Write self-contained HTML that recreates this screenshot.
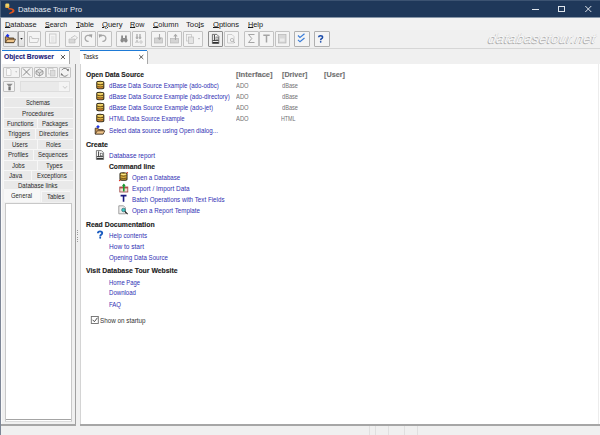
<!DOCTYPE html>
<html><head><meta charset="utf-8">
<style>
*{box-sizing:border-box;margin:0;padding:0}
html,body{width:600px;height:435px;overflow:hidden;background:#f0f0f0;font-family:"Liberation Sans",sans-serif}
body{position:relative}
.a{position:absolute}
.t{position:absolute;white-space:nowrap;line-height:9px;transform-origin:0 0;font-family:"Liberation Sans",sans-serif}
.t u{text-decoration:underline;text-underline-offset:0.3px;text-decoration-thickness:0.7px}
.b{position:absolute;border:1px solid #c2c2c2;border-radius:1px;background:#f4f4f4}
.tr{position:absolute;background:#e9e9e9;border-top:1px solid #f7f7f7;border-left:1px solid #f7f7f7}
svg{position:absolute;overflow:visible}
</style></head><body>
<!-- title bar -->
<div class="a" style="left:0;top:0;width:600px;height:17px;background:#1f385a"></div>
<div class="a" style="left:0;top:17px;width:600px;height:1px;background:#8796a8"></div>
<div class="a" style="left:0;top:0;width:1px;height:17px;background:#4a5f7a"></div>
<svg style="left:0;top:0" width="20" height="18">
 <path d="M8 8 Q13.5 7.5 14.6 10.5 Q14.5 13.2 8.8 14.2 L9.8 12.6 Q12.6 11.8 12.5 10.6 Q12 9.4 8.6 9.6 Z" fill="#e0541c"/>
 <rect x="5.3" y="3.6" width="4" height="4.4" rx="1.2" fill="#f2d267"/>
 <rect x="5.8" y="6.6" width="3" height="1.2" fill="#e2a23a"/>
</svg>
<!-- window controls -->
<div class="a" style="left:532px;top:8.5px;width:6.5px;height:1px;background:#dfe5ec"></div>
<div class="a" style="left:558px;top:6px;width:6.5px;height:6px;border:1px solid #dfe5ec"></div>
<svg style="left:585px;top:6px" width="7" height="6"><path d="M0.3 0 L6.3 6 M6.3 0 L0.3 6" stroke="#dfe5ec" stroke-width="1"/></svg>

<!-- menu -->
<div class="a" style="left:0;top:18px;width:600px;height:12px;background:#f2f2f2"></div>
<!-- toolbar -->
<div class="a" style="left:0;top:30px;width:600px;height:18px;background:#f0f0f0"></div>
<div class="a" style="left:0;top:48px;width:600px;height:1px;background:#d6d6d6"></div>
<!-- window borders -->
<div class="a" style="left:0;top:18px;width:1px;height:417px;background:#7d8696"></div><div class="a" style="left:1px;top:48px;width:1px;height:377px;background:#fafafa"></div>


<!-- toolbar buttons -->
<div class="b" style="left:3px;top:31px;width:15px;height:15.5px;border-color:#bdbdbd;background:#ececec"></div>
<div class="b" style="left:18px;top:31px;width:7px;height:15.5px;border-color:#b5b5b5;border-left:1.5px solid #9a9a9a;background:linear-gradient(#f2f2f2,#e2e2e2)"></div>
<div class="b" style="left:26.5px;top:31px;width:14.5px;height:15.5px"></div>
<div class="b" style="left:45.3px;top:31px;width:15px;height:15.5px"></div>
<div class="b" style="left:65.3px;top:31px;width:15px;height:15.5px"></div>
<div class="b" style="left:80.8px;top:31px;width:15px;height:15.5px"></div>
<div class="b" style="left:97px;top:31px;width:15px;height:15.5px"></div>
<div class="b" style="left:116.3px;top:31px;width:15px;height:15.5px"></div>
<div class="b" style="left:131.7px;top:31px;width:14.5px;height:15.5px"></div>
<div class="b" style="left:150.8px;top:31px;width:15px;height:15.5px"></div>
<div class="b" style="left:167px;top:31px;width:14.5px;height:15.5px"></div>
<div class="b" style="left:183.3px;top:31px;width:20px;height:15.5px"></div>
<div class="b" style="left:208.3px;top:31px;width:15px;height:15.5px;border-color:#8c8c8c;background:#f0f0f0"></div>
<div class="b" style="left:223.7px;top:31px;width:15.5px;height:15.5px"></div>
<div class="b" style="left:244.2px;top:31px;width:14.5px;height:15.5px"></div>
<div class="b" style="left:259.2px;top:31px;width:14.5px;height:15.5px"></div>
<div class="b" style="left:275px;top:31px;width:14.5px;height:15.5px"></div>
<div class="b" style="left:294.4px;top:31px;width:15.2px;height:15.5px;border-color:#b0b0b0"></div>
<div class="b" style="left:314px;top:31px;width:15.6px;height:15.5px;border-color:#b0b0b0"></div>


<!-- main toolbar icons -->
<svg style="left:0;top:30px" width="340" height="18">
 <!-- open folder -->
 <path d="M5.3 6.8 L5.3 12.6 L13.8 12.6 L13.8 8 L9 8 L8.3 6.8 Z" fill="#c89458" stroke="#3e3020" stroke-width="0.8"/>
 <path d="M5.3 12.6 L7.6 9.2 L15.6 9.2 L13.8 12.6 Z" fill="#f0c58a" stroke="#3e3020" stroke-width="0.7"/>
 <path d="M7.6 3.8 L9.5 5.7 L7.6 7.6 L5.7 5.7 Z" fill="#1a2ee8"/>
 <path d="M20.2 8 L22.8 8 L21.5 9.7 Z" fill="#222"/>
 <!-- faded folder -->
 <path d="M29.5 6.5 L29.5 12.5 L37.5 12.5 L39 8.5 L32 8.5 L31.5 6.5 Z" fill="none" stroke="#c4c4c4" stroke-width="0.9"/>
 <!-- doc -->
 <rect x="49.5" y="4" width="6.5" height="9" fill="none" stroke="#c8c8c8" stroke-width="0.9"/>
 <path d="M51 7 L54.5 7 M51 9 L54.5 9 M51 11 L54.5 11" stroke="#d0d0d0" stroke-width="0.7"/>
 <!-- box arrow -->
 <path d="M69 9 L69 13 L75 13 L75 9 Z" fill="#d8d8d8" stroke="#bdbdbd" stroke-width="0.7"/>
 <path d="M71 8 L75 5.5 L77.5 8 L74 10.5" fill="none" stroke="#c0c0c0" stroke-width="0.9"/>
 <!-- redo -->
 <path d="M88.6 11.3 A3 3 0 1 1 90.4 6.4" fill="none" stroke="#a8a8a8" stroke-width="1.3"/>
 <path d="M88.8 4.6 L92.3 4.3 L91.8 7.9 Z" fill="#a0a0a0"/>
 <!-- undo -->
 <path d="M102.4 11.3 A3 3 0 1 0 100.6 6.4" fill="none" stroke="#a8a8a8" stroke-width="1.3"/>
 <path d="M102.2 4.6 L98.7 4.3 L99.2 7.9 Z" fill="#a0a0a0"/>
 <!-- binoculars -->
 <rect x="121.2" y="5.5" width="1.8" height="3" fill="#8a8a8a"/>
 <rect x="125" y="5.5" width="1.8" height="3" fill="#8a8a8a"/>
 <ellipse cx="122.2" cy="10.2" rx="1.7" ry="2.2" fill="#8a8a8a"/>
 <ellipse cx="125.8" cy="10.2" rx="1.7" ry="2.2" fill="#8a8a8a"/>
 <rect x="122.5" y="8" width="3" height="1.6" fill="#8a8a8a"/>
 <!-- find replace -->
 <rect x="136.3" y="4" width="1.4" height="2.4" fill="#b0b0b0"/>
 <rect x="139.3" y="4" width="1.4" height="2.4" fill="#b0b0b0"/>
 <ellipse cx="137" cy="7.6" rx="1.3" ry="1.7" fill="#b0b0b0"/>
 <ellipse cx="140" cy="7.6" rx="1.3" ry="1.7" fill="#b0b0b0"/>
 <path d="M135.5 13 L137 10 L138.5 13 M136 12 L138 12" stroke="#b4b4b4" stroke-width="0.7" fill="none"/>
 <circle cx="141" cy="12" r="1.2" fill="none" stroke="#b4b4b4" stroke-width="0.7"/>
 <!-- insert -->
 <rect x="154.5" y="8" width="8" height="5" fill="#d4d4d4" stroke="#b8b8b8" stroke-width="0.7"/>
 <path d="M159.5 4 L159.5 9 M157.8 7.5 L159.5 9.5 L161.2 7.5" stroke="#a8a8a8" stroke-width="1.1" fill="none"/>
 <!-- append -->
 <rect x="170.5" y="8.5" width="8" height="4.5" fill="#d4d4d4" stroke="#b8b8b8" stroke-width="0.7"/>
 <path d="M175.5 10 L175.5 4.5 M173.8 6.5 L175.5 4.5 L177.2 6.5" stroke="#a8a8a8" stroke-width="1.1" fill="none"/>
 <!-- copy -->
 <rect x="186.5" y="4.5" width="5" height="6.5" fill="#f4f4f4" stroke="#c0c0c0" stroke-width="0.7"/>
 <rect x="188.5" y="7" width="5" height="6.5" fill="#e4e4e4" stroke="#b8b8b8" stroke-width="0.7"/>
 <path d="M198 8.3 L200 8.3 L199 9.4 Z" fill="#9a9a9a"/>
 <!-- report -->
 <path d="M212.4 4.4 L216.8 4.4 L218.8 6.4 L218.8 13.5 L212.4 13.5 Z" fill="#fbfbfb" stroke="#505050" stroke-width="0.8"/>
 <path d="M214.4 5 L214.4 10.6 M212.6 10.6 L218.6 10.6" stroke="#2a2a2a" stroke-width="0.9" fill="none"/>
 <rect x="216" y="7" width="2" height="3" fill="none" stroke="#555" stroke-width="0.6"/>
 <rect x="212.6" y="12" width="6" height="1.3" fill="#2e2e2e"/>
 <!-- preview -->
 <path d="M227.5 4.5 L232 4.5 L234 6.5 L234 13 L227.5 13 Z" fill="none" stroke="#c4c4c4" stroke-width="0.8"/>
 <circle cx="232" cy="10" r="1.6" fill="none" stroke="#b0b0b0" stroke-width="0.8"/>
 <path d="M233.2 11.2 L235 13" stroke="#b0b0b0" stroke-width="0.9"/>
 <!-- sigma -->
 <path d="M248.5 4.5 L254.5 4.5 M248.5 4.5 L251.8 8.5 L248.5 12.5 L254.5 12.5" stroke="#a4a4a4" stroke-width="1" fill="none"/>
 <!-- T -->
 <path d="M263.3 5.3 L269.7 5.3 M266.5 5.3 L266.5 12.5" stroke="#a4a4a4" stroke-width="1.5" fill="none"/>
 <!-- save-ish -->
 <rect x="278.5" y="4.5" width="7.5" height="8.5" fill="#d8d8d8" stroke="#b5b5b5" stroke-width="0.7"/>
 <rect x="280" y="8.5" width="4.5" height="3" fill="#ececec"/>
 <!-- checks -->
 <path d="M298 5.5 L300 7.5 L304.5 3.8 M298 9.8 L300 11.8 L304.5 8" stroke="#3b7dd8" stroke-width="1.2" fill="none"/>
 <!-- help ? -->
 <path d="M318.6 7.3 Q318.7 5.8 320.6 5.8 Q322.6 5.8 322.6 7.3 Q322.6 8.3 321.4 8.8 Q320.7 9.1 320.7 10.2" stroke="#1a4aa8" stroke-width="1.5" fill="none"/>
 <circle cx="320.7" cy="11.8" r="0.85" fill="#1a4aa8"/>
</svg>

<!-- watermark -->
<div class="t" style="left:489.5px;top:31px;font-size:13.5px;line-height:16px;font-style:italic;color:#f8f8f8;text-shadow:-0.8px 0.5px 0 #b0b0b0,0.6px 0.3px 0 #d0d0d0;transform:scaleX(1.06) skewX(-10deg)">databasetour.net</div>

<!-- left panel -->
<div class="a" style="left:2px;top:50px;width:67px;height:14px;background:#fff"></div>
<div class="a" style="left:2px;top:50px;width:67px;height:1.3px;background:#1e7ad6"></div>
<div class="a" style="left:68.5px;top:51px;width:1px;height:13px;background:#a8a8a8"></div>
<div class="a" style="left:75px;top:64px;width:1px;height:361px;background:#a0a0a0"></div>
<div class="a" style="left:1px;top:424px;width:75px;height:2px;background:#a6a6a6"></div>
<div class="a" style="left:5px;top:203px;width:67px;height:219px;background:#fff;border:1px solid #c8c8c8;border-bottom-color:#dcdcdc;box-shadow:inset 0 -1px 0 #ffffff, inset 0 -2px 0 #a4a4a4"></div>


<!-- left toolbar -->
<div class="b" style="left:3.4px;top:66.5px;width:16.2px;height:11px;border-color:#c4c4c4;background:#f3f3f3"></div>
<div class="b" style="left:20.5px;top:66.5px;width:12px;height:11px;border-color:#c4c4c4;background:#f3f3f3"></div>
<div class="b" style="left:33.8px;top:66.5px;width:11.8px;height:11px;border-color:#c4c4c4;background:#f3f3f3"></div>
<div class="b" style="left:46px;top:66.5px;width:12px;height:11px;border-color:#c4c4c4;background:#f3f3f3"></div>
<div class="b" style="left:58.8px;top:66.5px;width:12px;height:11px;border-color:#c4c4c4;background:#f3f3f3"></div>
<div class="b" style="left:3.4px;top:81px;width:12px;height:11.3px;border-color:#c0c0c0;background:#f3f3f3"></div>
<div class="a" style="left:19.5px;top:81.2px;width:50px;height:11.2px;border:1px solid #dedede;background:#eaeaea"></div>
<div class="a" style="left:58.5px;top:82.2px;width:10px;height:9.2px;background:#f4f4f4"></div>
<svg style="left:0;top:64px" width="76" height="30">
 <path d="M6.5 4.5 L9.5 4.5 L11 6 L11 11.5 L6.5 11.5 Z" fill="#fafafa" stroke="#c4c4c4" stroke-width="0.7"/>
 <path d="M15.3 7.5 L17 7.5 L16.15 8.5 Z" fill="#8a8a8a"/>
 <path d="M23 4.5 L30 11.5 M30 4.5 L23 11.5" stroke="#7a7a7a" stroke-width="0.9"/>
 <path d="M36 7 L39.5 5 L43 7 L43 10 L39.5 12 L36 10 Z" fill="#e0e0e0" stroke="#8e8e8e" stroke-width="0.8"/>
 <path d="M36 7 L39.5 9 L43 7 M39.5 9 L39.5 12" stroke="#8e8e8e" stroke-width="0.7" fill="none"/>
 <rect x="48.5" y="4.5" width="4.5" height="5.5" fill="#f6f6f6" stroke="#c4c4c4" stroke-width="0.6"/>
 <rect x="50.5" y="6.5" width="4.5" height="5.5" fill="#dcdcdc" stroke="#bcbcbc" stroke-width="0.6"/>
 <path d="M61.8 6.2 A3.3 3.3 0 0 1 68 7 M67.8 10.5 A3.3 3.3 0 0 1 61.6 9.6" fill="none" stroke="#7a7a7a" stroke-width="0.9"/>
 <path d="M66.5 5.5 L68.5 7.5 L69 4.8 Z M63 11 L61 9 L60.8 11.6 Z" fill="#7a7a7a"/>
 <path d="M6.5 19.8 L12.7 19.8 L10.5 22.3 L8.6 22.3 Z" fill="#8c8c8c"/>
 <rect x="8.4" y="22.5" width="2.3" height="3.8" fill="#707070"/>
 <path d="M63 22.2 L65 24.4 L67 22.2" stroke="#b4b4b4" stroke-width="0.7" fill="none"/>
</svg>


<!-- multirow tabs -->
<div class="tr" style="left:3.3px;top:97.3px;width:69.4px;height:10px"></div>
<div class="tr" style="left:3.3px;top:107.3px;width:69.4px;height:10.7px"></div>
<div class="tr" style="left:3.3px;top:118px;width:34px;height:10px"></div>
<div class="tr" style="left:37.3px;top:118px;width:35.4px;height:10px"></div>
<div class="tr" style="left:3.3px;top:128px;width:31.7px;height:10.5px"></div>
<div class="tr" style="left:35px;top:128px;width:37.7px;height:10.5px"></div>
<div class="tr" style="left:3.3px;top:138.5px;width:33.4px;height:10.8px"></div>
<div class="tr" style="left:36.7px;top:138.5px;width:36px;height:10.8px"></div>
<div class="tr" style="left:3.3px;top:149.3px;width:29.4px;height:10.4px"></div>
<div class="tr" style="left:32.7px;top:149.3px;width:40px;height:10.4px"></div>
<div class="tr" style="left:3.3px;top:159.7px;width:33.4px;height:10.3px"></div>
<div class="tr" style="left:36.7px;top:159.7px;width:36px;height:10.3px"></div>
<div class="tr" style="left:3.3px;top:170px;width:28px;height:10px"></div>
<div class="tr" style="left:31.3px;top:170px;width:41.4px;height:10px"></div>
<div class="tr" style="left:3.3px;top:180px;width:69.4px;height:9.3px"></div>
<div class="a" style="left:4px;top:189.3px;width:36px;height:13px;background:#f7f7f7"></div>
<div class="tr" style="left:40.7px;top:191px;width:29.3px;height:11px"></div>

<!-- right tab & content -->
<div class="a" style="left:80px;top:50px;width:67px;height:14px;background:#fff"></div>
<div class="a" style="left:80px;top:50px;width:67px;height:1.3px;background:#1e7ad6"></div>
<div class="a" style="left:146.5px;top:51px;width:1px;height:13px;background:#a8a8a8"></div>
<div class="a" style="left:80px;top:64px;width:520px;height:361px;background:#fff"></div>
<div class="a" style="left:80px;top:64px;width:1px;height:361px;background:#d4d4d4"></div>
<div class="a" style="left:80px;top:424px;width:520px;height:2px;background:#a6a6a6"></div>
<!-- tab close x -->
<svg style="left:0;top:50px" width="150" height="14">
 <path d="M60.9 5 L65 9 M65 5 L60.9 9" stroke="#444" stroke-width="0.9"/>
 <path d="M139.2 5 L143.3 9 M143.3 5 L139.2 9" stroke="#444" stroke-width="0.9"/>
</svg>
<!-- content icons -->
<svg style="left:0;top:0" width="600" height="435">
<g transform="translate(96.3,81)">
 <path d="M0.5 1.5 Q0.5 0.3 4 0.3 Q7.5 0.3 7.5 1.5 L7.5 6.7 Q7.5 7.8 4 7.8 Q0.5 7.8 0.5 6.7 Z" fill="#d0a030" stroke="#2e2818" stroke-width="1.05"/>
 <path d="M1.3 1.6 Q4 2.6 6.7 1.6" stroke="#fae88a" stroke-width="1.1" fill="none"/>
 <path d="M1.2 3.4 Q4 4.3 6.8 3.4" stroke="#4a3a18" stroke-width="0.8" fill="none"/>
 <path d="M1.2 4.4 Q4 5.3 6.8 4.4" stroke="#f0c850" stroke-width="0.8" fill="none"/>
 <path d="M1.2 5.6 Q4 6.5 6.8 5.6" stroke="#5a4018" stroke-width="0.8" fill="none"/>
 <path d="M2 6.6 Q4 7.2 6 6.6" stroke="#e06a40" stroke-width="0.6" fill="none"/>
</g>
<g transform="translate(96.3,92)">
 <path d="M0.5 1.5 Q0.5 0.3 4 0.3 Q7.5 0.3 7.5 1.5 L7.5 6.7 Q7.5 7.8 4 7.8 Q0.5 7.8 0.5 6.7 Z" fill="#d0a030" stroke="#2e2818" stroke-width="1.05"/>
 <path d="M1.3 1.6 Q4 2.6 6.7 1.6" stroke="#fae88a" stroke-width="1.1" fill="none"/>
 <path d="M1.2 3.4 Q4 4.3 6.8 3.4" stroke="#4a3a18" stroke-width="0.8" fill="none"/>
 <path d="M1.2 4.4 Q4 5.3 6.8 4.4" stroke="#f0c850" stroke-width="0.8" fill="none"/>
 <path d="M1.2 5.6 Q4 6.5 6.8 5.6" stroke="#5a4018" stroke-width="0.8" fill="none"/>
 <path d="M2 6.6 Q4 7.2 6 6.6" stroke="#e06a40" stroke-width="0.6" fill="none"/>
</g>
<g transform="translate(96.3,103)">
 <path d="M0.5 1.5 Q0.5 0.3 4 0.3 Q7.5 0.3 7.5 1.5 L7.5 6.7 Q7.5 7.8 4 7.8 Q0.5 7.8 0.5 6.7 Z" fill="#d0a030" stroke="#2e2818" stroke-width="1.05"/>
 <path d="M1.3 1.6 Q4 2.6 6.7 1.6" stroke="#fae88a" stroke-width="1.1" fill="none"/>
 <path d="M1.2 3.4 Q4 4.3 6.8 3.4" stroke="#4a3a18" stroke-width="0.8" fill="none"/>
 <path d="M1.2 4.4 Q4 5.3 6.8 4.4" stroke="#f0c850" stroke-width="0.8" fill="none"/>
 <path d="M1.2 5.6 Q4 6.5 6.8 5.6" stroke="#5a4018" stroke-width="0.8" fill="none"/>
 <path d="M2 6.6 Q4 7.2 6 6.6" stroke="#e06a40" stroke-width="0.6" fill="none"/>
</g>
<g transform="translate(96.3,114)">
 <path d="M0.5 1.5 Q0.5 0.3 4 0.3 Q7.5 0.3 7.5 1.5 L7.5 6.7 Q7.5 7.8 4 7.8 Q0.5 7.8 0.5 6.7 Z" fill="#d0a030" stroke="#2e2818" stroke-width="1.05"/>
 <path d="M1.3 1.6 Q4 2.6 6.7 1.6" stroke="#fae88a" stroke-width="1.1" fill="none"/>
 <path d="M1.2 3.4 Q4 4.3 6.8 3.4" stroke="#4a3a18" stroke-width="0.8" fill="none"/>
 <path d="M1.2 4.4 Q4 5.3 6.8 4.4" stroke="#f0c850" stroke-width="0.8" fill="none"/>
 <path d="M1.2 5.6 Q4 6.5 6.8 5.6" stroke="#5a4018" stroke-width="0.8" fill="none"/>
 <path d="M2 6.6 Q4 7.2 6 6.6" stroke="#e06a40" stroke-width="0.6" fill="none"/>
</g>

 <!-- open folder -->
 <path d="M95.2 128.2 L95.2 134 L103.2 134 L103.2 129.6 L98.6 129.6 L97.9 128.2 Z" fill="#c48e50" stroke="#3a2c1c" stroke-width="0.8"/>
 <path d="M95.2 134 L97.4 130.8 L104.9 130.8 L103.2 134 Z" fill="#f0c488" stroke="#3a2c1c" stroke-width="0.7"/>
 <path d="M98 124.9 L99.8 126.7 L98 128.5 L96.2 126.7 Z" fill="#1c30e0"/>
 <!-- report doc -->
 <path d="M96.4 150.6 L101.4 150.6 L103.6 152.8 L103.6 159.5 L96.4 159.5 Z" fill="#fbfbfb" stroke="#5a5a5a" stroke-width="0.8"/>
 <path d="M98.6 151.4 L98.6 156.6 M96.8 156.6 L103.2 156.6" stroke="#2a2a2a" stroke-width="0.9" fill="none"/>
 <rect x="100.3" y="153.2" width="2.1" height="2.6" fill="none" stroke="#555" stroke-width="0.6"/>
 <rect x="96.8" y="157.9" width="6.4" height="1.2" fill="#333"/>
 <!-- cmd db w/ red -->
 <g transform="translate(119.5,172.5)">
  <path d="M0.5 1.5 Q0.5 0.3 4 0.3 Q7.5 0.3 7.5 1.5 L7.5 6.7 Q7.5 7.8 4 7.8 Q0.5 7.8 0.5 6.7 Z" fill="#d0a030" stroke="#2e2818" stroke-width="1.05"/>
  <path d="M1.3 1.6 Q4 2.6 6.7 1.6" stroke="#fae88a" stroke-width="1.1" fill="none"/>
  <path d="M1.2 3.4 Q4 4.3 6.8 3.4" stroke="#4a3a18" stroke-width="0.8" fill="none"/>
  <path d="M1.2 4.4 Q4 5.3 6.8 4.4" stroke="#f0c850" stroke-width="0.8" fill="none"/>
  <path d="M1.2 5.6 Q4 6.5 6.8 5.6" stroke="#5a4018" stroke-width="0.8" fill="none"/>
  <circle cx="7.8" cy="0.2" r="0.8" fill="#e03020"/>
  <circle cx="0.2" cy="8" r="0.8" fill="#e03020"/>
 </g>
 <!-- export/import -->
 <rect x="119.8" y="187" width="8" height="5" fill="#efe0d0" stroke="#9a4040" stroke-width="0.8"/>
 <rect x="119.8" y="187" width="8" height="1.4" fill="#b84a4a"/>
 <path d="M123.8 191.5 L123.8 184.5" stroke="#1a9a30" stroke-width="1.6"/>
 <path d="M121.8 186.3 L123.8 183.6 L125.8 186.3 Z" fill="#1a9a30"/>
 <!-- T -->
 <path d="M120.6 195.6 L126.5 195.6 M123.55 195.6 L123.55 201.8" stroke="#1a1a80" stroke-width="1.6" fill="none"/>
 <!-- report template -->
 <path d="M118.8 205.8 L123.5 205.8 L125.5 207.8 L125.5 213.8 L118.8 213.8 Z" fill="#f0f0f0" stroke="#8a8a8a" stroke-width="0.8"/>
 <circle cx="123.5" cy="210" r="1.8" fill="#40c8c8" stroke="#2a6a6a" stroke-width="0.7"/>
 <path d="M124.8 211.3 L127.6 214.1" stroke="#222" stroke-width="1.2"/>
 <!-- help ? -->
 <path d="M97.9 233.2 Q98 231.4 100 231.4 Q102.2 231.4 102.2 233 Q102.2 234.2 101 234.8 Q100.2 235.2 100.2 236.4" stroke="#1a5cc0" stroke-width="1.9" fill="none"/>
 <circle cx="100.2" cy="237.8" r="1" fill="#1a5cc0"/>
 <!-- checkbox -->
 <rect x="91.3" y="316.5" width="7" height="7" fill="#fff" stroke="#6e6e6e" stroke-width="0.9"/>
 <path d="M92.6 319.8 L94.4 321.7 L97.4 317.8" stroke="#3a3a3a" stroke-width="0.9" fill="none"/>
</svg>

<!-- grip --><div class="a" style="left:77.3px;top:230.0px;width:1px;height:1px;background:#9a9a9a"></div><div class="a" style="left:77.3px;top:232.2px;width:1px;height:1px;background:#9a9a9a"></div><div class="a" style="left:77.3px;top:234.4px;width:1px;height:1px;background:#9a9a9a"></div><div class="a" style="left:77.3px;top:236.6px;width:1px;height:1px;background:#9a9a9a"></div><div class="a" style="left:77.3px;top:238.8px;width:1px;height:1px;background:#9a9a9a"></div><div class="a" style="left:77.3px;top:241.0px;width:1px;height:1px;background:#9a9a9a"></div>
<!-- status bar -->
<div class="a" style="left:1px;top:426px;width:599px;height:9px;background:#f0f0f0"></div>

<!-- status seps --><div class="a" style="left:369px;top:426px;width:1px;height:9px;background:#e0e0e0"></div><div class="a" style="left:375px;top:426px;width:1px;height:9px;background:#e0e0e0"></div><div class="a" style="left:388px;top:426px;width:1px;height:9px;background:#e0e0e0"></div><div class="a" style="left:404px;top:426px;width:1px;height:9px;background:#e0e0e0"></div><div class="a" style="left:417px;top:426px;width:1px;height:9px;background:#e0e0e0"></div>
<div class="a" style="left:598px;top:64px;width:1px;height:360px;background:#ececec"></div>
<div class="a" style="left:0;top:0;width:600px;height:1px;background:#3c5372"></div>
<div class="t" style="left:86.4px;top:70.1px;font-size:7px;font-weight:bold;color:#202020;transform:scaleX(0.956);-webkit-text-stroke:0.12px currentColor">Open Data Source</div>
<div class="t" style="left:236.4px;top:70.1px;font-size:7px;font-weight:bold;color:#707070;transform:scaleX(1.081);-webkit-text-stroke:0.12px currentColor">[Interface]</div>
<div class="t" style="left:281.6px;top:70.1px;font-size:7px;font-weight:bold;color:#707070;transform:scaleX(1.020);-webkit-text-stroke:0.12px currentColor">[Driver]</div>
<div class="t" style="left:324.0px;top:70.1px;font-size:7px;font-weight:bold;color:#707070;transform:scaleX(1.038);-webkit-text-stroke:0.12px currentColor">[User]</div>
<div class="t" style="left:109.3px;top:81.1px;font-size:7px;font-weight:normal;color:#3030b4;transform:scaleX(0.873)">dBase Data Source Example (ado-odbc)</div>
<div class="t" style="left:109.3px;top:92.1px;font-size:7px;font-weight:normal;color:#3030b4;transform:scaleX(0.879)">dBase Data Source Example (ado-directory)</div>
<div class="t" style="left:109.3px;top:103.1px;font-size:7px;font-weight:normal;color:#3030b4;transform:scaleX(0.882)">dBase Data Source Example (ado-jet)</div>
<div class="t" style="left:108.8px;top:114.1px;font-size:7px;font-weight:normal;color:#3030b4;transform:scaleX(0.852)">HTML Data Source Example</div>
<div class="t" style="left:236.4px;top:81.1px;font-size:7px;font-weight:normal;color:#707070;transform:scaleX(0.830)">ADO</div>
<div class="t" style="left:236.4px;top:92.1px;font-size:7px;font-weight:normal;color:#707070;transform:scaleX(0.830)">ADO</div>
<div class="t" style="left:236.4px;top:103.1px;font-size:7px;font-weight:normal;color:#707070;transform:scaleX(0.830)">ADO</div>
<div class="t" style="left:236.4px;top:114.1px;font-size:7px;font-weight:normal;color:#707070;transform:scaleX(0.830)">ADO</div>
<div class="t" style="left:281.6px;top:81.1px;font-size:7px;font-weight:normal;color:#707070;transform:scaleX(0.806)">dBase</div>
<div class="t" style="left:281.6px;top:92.1px;font-size:7px;font-weight:normal;color:#707070;transform:scaleX(0.806)">dBase</div>
<div class="t" style="left:281.6px;top:103.1px;font-size:7px;font-weight:normal;color:#707070;transform:scaleX(0.806)">dBase</div>
<div class="t" style="left:281.3px;top:114.1px;font-size:7px;font-weight:normal;color:#707070;transform:scaleX(0.761)">HTML</div>
<div class="t" style="left:108.8px;top:125.6px;font-size:7px;font-weight:normal;color:#3030b4;transform:scaleX(0.892)">Select data source using Open dialog...</div>
<div class="t" style="left:86.0px;top:139.9px;font-size:7px;font-weight:bold;color:#202020;transform:scaleX(1.009);-webkit-text-stroke:0.12px currentColor">Create</div>
<div class="t" style="left:108.8px;top:151.0px;font-size:7px;font-weight:normal;color:#3030b4;transform:scaleX(0.916)">Database report</div>
<div class="t" style="left:109.3px;top:162.1px;font-size:7px;font-weight:bold;color:#202020;transform:scaleX(0.954);-webkit-text-stroke:0.12px currentColor">Command line</div>
<div class="t" style="left:132.2px;top:172.9px;font-size:7px;font-weight:normal;color:#3030b4;transform:scaleX(0.880)">Open a Database</div>
<div class="t" style="left:132.2px;top:184.1px;font-size:7px;font-weight:normal;color:#3030b4;transform:scaleX(0.920)">Export / Import Data</div>
<div class="t" style="left:132.2px;top:195.0px;font-size:7px;font-weight:normal;color:#3030b4;transform:scaleX(0.892)">Batch Operations with Text Fields</div>
<div class="t" style="left:132.2px;top:206.0px;font-size:7px;font-weight:normal;color:#3030b4;transform:scaleX(0.893)">Open a Report Template</div>
<div class="t" style="left:86.4px;top:219.6px;font-size:7px;font-weight:bold;color:#202020;transform:scaleX(0.980);-webkit-text-stroke:0.12px currentColor">Read Documentation</div>
<div class="t" style="left:109.0px;top:230.5px;font-size:7px;font-weight:normal;color:#3030b4;transform:scaleX(0.888)">Help contents</div>
<div class="t" style="left:109.0px;top:241.5px;font-size:7px;font-weight:normal;color:#3030b4;transform:scaleX(0.937)">How to start</div>
<div class="t" style="left:109.0px;top:252.5px;font-size:7px;font-weight:normal;color:#3030b4;transform:scaleX(0.876)">Opening Data Source</div>
<div class="t" style="left:86.4px;top:266.0px;font-size:7px;font-weight:bold;color:#202020;transform:scaleX(0.981);-webkit-text-stroke:0.12px currentColor">Visit Database Tour Website</div>
<div class="t" style="left:109.0px;top:277.5px;font-size:7px;font-weight:normal;color:#3030b4;transform:scaleX(0.839)">Home Page</div>
<div class="t" style="left:109.0px;top:288.3px;font-size:7px;font-weight:normal;color:#3030b4;transform:scaleX(0.867)">Download</div>
<div class="t" style="left:109.0px;top:299.5px;font-size:7px;font-weight:normal;color:#3030b4;transform:scaleX(0.856)">FAQ</div>
<div class="t" style="left:99.7px;top:316.1px;font-size:7px;font-weight:normal;color:#333333;transform:scaleX(0.899)">Show on startup</div>
<div class="t" style="left:5.0px;top:19.8px;font-size:7.3px;font-weight:normal;color:#1a1a1a;transform:scaleX(1.011)"><u>D</u>atabase</div>
<div class="t" style="left:45.0px;top:19.8px;font-size:7.3px;font-weight:normal;color:#1a1a1a;transform:scaleX(0.951)"><u>S</u>earch</div>
<div class="t" style="left:75.6px;top:19.8px;font-size:7.3px;font-weight:normal;color:#1a1a1a;transform:scaleX(1.031)"><u>T</u>able</div>
<div class="t" style="left:101.7px;top:19.8px;font-size:7.3px;font-weight:normal;color:#1a1a1a;transform:scaleX(1.036)"><u>Q</u>uery</div>
<div class="t" style="left:130.2px;top:19.8px;font-size:7.3px;font-weight:normal;color:#1a1a1a;transform:scaleX(0.979)"><u>R</u>ow</div>
<div class="t" style="left:152.7px;top:19.8px;font-size:7.3px;font-weight:normal;color:#1a1a1a;transform:scaleX(1.014)"><u>C</u>olumn</div>
<div class="t" style="left:186.3px;top:19.8px;font-size:7.3px;font-weight:normal;color:#1a1a1a;transform:scaleX(1.056)">Too<u>l</u>s</div>
<div class="t" style="left:212.7px;top:19.8px;font-size:7.3px;font-weight:normal;color:#1a1a1a;transform:scaleX(1.038)"><u>O</u>ptions</div>
<div class="t" style="left:247.5px;top:19.8px;font-size:7.3px;font-weight:normal;color:#1a1a1a;transform:scaleX(0.999)"><u>H</u>elp</div>
<div class="t" style="left:18.0px;top:5.1px;font-size:7.6px;font-weight:normal;color:#e6ebf2;transform:scaleX(1.013)">Database Tour Pro</div>
<div class="t" style="left:4.2px;top:52.3px;font-size:7px;font-weight:bold;color:#20207a;transform:scaleX(0.962);-webkit-text-stroke:0.12px currentColor">Object Browser</div>
<div class="t" style="left:82.8px;top:51.8px;font-size:7px;font-weight:normal;color:#222222;transform:scaleX(0.849)">Tasks</div>
<div class="t" style="left:26.0px;top:98.2px;font-size:6.6px;font-weight:normal;color:#2a2a2a;transform:scaleX(0.873)">Schemas</div>
<div class="t" style="left:22.0px;top:108.9px;font-size:6.6px;font-weight:normal;color:#2a2a2a;transform:scaleX(0.949)">Procedures</div>
<div class="t" style="left:7.3px;top:118.5px;font-size:6.6px;font-weight:normal;color:#2a2a2a;transform:scaleX(0.934)">Functions</div>
<div class="t" style="left:42.0px;top:118.5px;font-size:6.6px;font-weight:normal;color:#2a2a2a;transform:scaleX(0.898)">Packages</div>
<div class="t" style="left:8.3px;top:129.2px;font-size:6.6px;font-weight:normal;color:#2a2a2a;transform:scaleX(0.923)">Triggers</div>
<div class="t" style="left:38.7px;top:129.2px;font-size:6.6px;font-weight:normal;color:#2a2a2a;transform:scaleX(0.930)">Directories</div>
<div class="t" style="left:12.0px;top:139.9px;font-size:6.6px;font-weight:normal;color:#2a2a2a;transform:scaleX(0.912)">Users</div>
<div class="t" style="left:46.0px;top:139.9px;font-size:6.6px;font-weight:normal;color:#2a2a2a;transform:scaleX(0.890)">Roles</div>
<div class="t" style="left:8.0px;top:150.2px;font-size:6.6px;font-weight:normal;color:#2a2a2a;transform:scaleX(0.923)">Profiles</div>
<div class="t" style="left:37.6px;top:150.2px;font-size:6.6px;font-weight:normal;color:#2a2a2a;transform:scaleX(0.900)">Sequences</div>
<div class="t" style="left:12.3px;top:160.5px;font-size:6.6px;font-weight:normal;color:#2a2a2a;transform:scaleX(0.911)">Jobs</div>
<div class="t" style="left:46.0px;top:160.5px;font-size:6.6px;font-weight:normal;color:#2a2a2a;transform:scaleX(0.949)">Types</div>
<div class="t" style="left:9.3px;top:170.8px;font-size:6.6px;font-weight:normal;color:#2a2a2a;transform:scaleX(0.940)">Java</div>
<div class="t" style="left:37.0px;top:170.8px;font-size:6.6px;font-weight:normal;color:#2a2a2a;transform:scaleX(0.920)">Exceptions</div>
<div class="t" style="left:18.0px;top:181.2px;font-size:6.6px;font-weight:normal;color:#2a2a2a;transform:scaleX(0.916)">Database links</div>
<div class="t" style="left:11.0px;top:190.5px;font-size:6.6px;font-weight:normal;color:#2a2a2a;transform:scaleX(0.895)">General</div>
<div class="t" style="left:47.3px;top:191.9px;font-size:6.6px;font-weight:normal;color:#2a2a2a;transform:scaleX(0.913)">Tables</div>
</body></html>
